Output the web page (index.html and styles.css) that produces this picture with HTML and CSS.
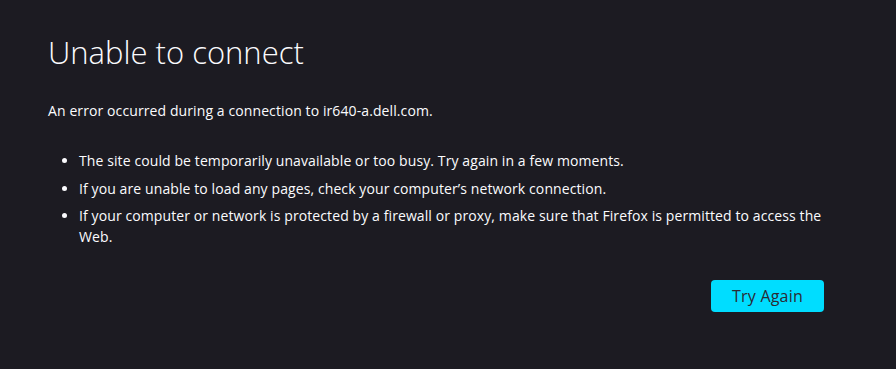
FILE: index.html
```html
<!DOCTYPE html>
<html>
<head>
<meta charset="utf-8">
<link rel="stylesheet" href="styles.css">
</head>
<body>
<div class="container">
  <h1 class="title">Unable to connect</h1>
  <p class="desc">An error occurred during a connection to ir640-a.dell.com.</p>
  <ul class="tips">
    <li>The site could be temporarily unavailable or too busy. Try again in a few moments.</li>
    <li>If you are unable to load any pages, check your computer’s network connection.</li>
    <li>If your computer or network is protected by a firewall or proxy, make sure that Firefox is permitted to access the Web.</li>
  </ul>
  <div class="actions">
    <button class="retry">Try Again</button>
  </div>
</div>
</body>
</html>
```

FILE: styles.css
```css
html, body {
  margin: 0;
  padding: 0;
  background: #1c1b22;
  color: #fbfbfe;
  font-family: "Open Sans", "Noto Sans", sans-serif;
  font-size: 14px;
}
.container {
  width: 776px;
  padding: 30px 0 0 48px;
}
.title {
  margin: 0;
  font-size: 31px;
  font-weight: 300;
  line-height: 44px;
}
.desc {
  margin: 26px 0 0;
  line-height: 22px;
  letter-spacing: 0.1px;
}
.tips {
  margin: 28px 0 0;
  padding-left: 31px;
  letter-spacing: 0.1px;
}
.tips li {
  line-height: 21px;
  margin-bottom: 7px;
}
.tips li:last-child {
  line-height: 20.5px;
}
.actions {
  display: flex;
  justify-content: flex-end;
  margin-top: 33px;
}
.retry {
  width: 113px;
  height: 32px;
  background: #00ddff;
  color: #2b2a33;
  border: none;
  border-radius: 4px;
  font-family: inherit;
  font-size: 16px;
  font-weight: 500;
  letter-spacing: 0.2px;
}
```
